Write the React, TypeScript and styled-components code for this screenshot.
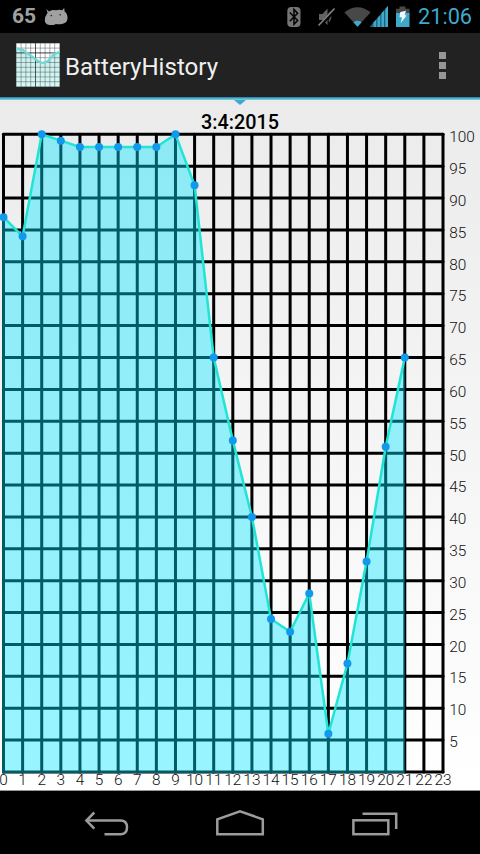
import styled, { createGlobalStyle } from "styled-components";

const colors = {
  holo: "#3fa9cc",
  status: "#a0a0a0",
  dim: "#5b5b5b",
  bar: "#222222",
  nav: "#9c9c9c",
  line: "#1fe4d6",
  dot: "#1199ee",
};

const levels = [87, 84, 100, 99, 98, 98, 98, 98, 98, 100, 92, 65, 52, 40, 24, 22, 28, 6, 17, 33, 51, 65];
const hours = Array.from({ length: 24 }, (_, i) => i);
const steps = Array.from({ length: 21 }, (_, i) => i * 5);

// chart geometry, relative to the top of the chart view
const LEFT = 3.5;
const RIGHT = 443;
const TOP = 34.3;
const BOTTOM = 672;

const toX = (hour: number) => LEFT + (hour * (RIGHT - LEFT)) / 23;
const toY = (level: number) => BOTTOM - (level * (BOTTOM - TOP)) / 100;

export default function App() {
  return (
    <Screen>
      <GlobalStyle />
      <StatusBar>
        <BatteryPercent>65</BatteryPercent>
        <DroidIcon />
        <StatusIcons />
        <Clock>21:06</Clock>
      </StatusBar>
      <ActionBar>
        <AppIcon />
        <AppTitle>BatteryHistory</AppTitle>
        <Overflow>
          <OverflowDot />
          <OverflowDot />
          <OverflowDot />
        </Overflow>
      </ActionBar>
      <TabStrip />
      <Content>
        <TabMarker />
        <ChartTitle>3:4:2015</ChartTitle>
        <BatteryChart />
      </Content>
      <NavBar>
        <NavIcons />
      </NavBar>
    </Screen>
  );
}

function BatteryChart() {
  const points = levels.map((level, hour) => `${toX(hour)},${toY(level)}`).join(" ");
  return (
    <Chart width="480" height="691" viewBox="0 0 480 691">
      <g stroke="#000" strokeWidth="3" strokeLinecap="round">
        {steps.map((level) => (
          <line key={level} x1={LEFT} x2={RIGHT} y1={toY(level)} y2={toY(level)} />
        ))}
        {hours.map((hour) => (
          <line key={hour} x1={toX(hour)} x2={toX(hour)} y1={TOP} y2={BOTTOM} />
        ))}
      </g>
      {steps.slice(1).map((level) => (
        <AxisLabel key={level} x={449.2} y={toY(level) + 6.9 + level / 100}>
          {level}
        </AxisLabel>
      ))}
      {hours.map((hour) => (
        <AxisLabel key={hour} x={toX(hour)} y={684.6} textAnchor="middle">
          {hour}
        </AxisLabel>
      ))}
      <polygon
        points={`${LEFT - 1.5},${BOTTOM + 1} ${LEFT - 1.5},${toY(levels[0])} ${points} ${toX(21)},${BOTTOM + 1}`}
        fill="rgba(0, 230, 255, 0.4)"
      />
      <polyline points={points} fill="none" stroke={colors.line} strokeWidth="2.5" />
      {levels.map((level, hour) => (
        <circle key={hour} cx={toX(hour)} cy={toY(level)} r="4" fill={colors.dot} />
      ))}
    </Chart>
  );
}

function DroidIcon() {
  return (
    <svg width="26" height="33" viewBox="0 0 26 33">
      <path
        d="M2.3 9 L5 11.4 Q8 9.6 12 10.2 Q15.5 9.2 18.2 10.3 L20.2 8 L20.6 11.6 Q23.8 14 23.5 18.6 Q23 23.5 18 23.9 Q14.5 24.5 12 23.9 Q9 25.5 5.4 25 Q1 24.4 .8 20.8 Q.7 16.5 3.6 12.8 Z"
        fill={colors.status}
      />
      <circle cx="7.3" cy="15.6" r=".8" fill="#222" />
      <circle cx="16.2" cy="14.8" r=".8" fill="#222" />
    </svg>
  );
}

function StatusIcons() {
  return (
    <StatusIconRow width="130" height="33" viewBox="284 0 130 33">
      <rect x="287.3" y="7" width="13.2" height="20" rx="4" fill="#757575" />
      <path d="M289.8 12.5 L297.6 20.5 L294 24.2 V9.5 L297.6 13.2 L289.8 21.2" fill="none" stroke="#050505" strokeWidth="1.6" />
      <path d="M319 14 H322.5 L327.5 8.5 V25 L322.5 20 H319 Z" fill="#626262" />
      <path d="M329 12.5 Q332 17 329 21.5" fill="none" stroke="#555" strokeWidth="1.7" />
      <path d="M319.5 26 L335.5 9" stroke="#000" strokeWidth="3.4" />
      <path d="M318.5 25.5 L334.5 8.5" stroke="#858585" strokeWidth="1.6" />
      <path d="M344.3 12.3 Q357.5 2 370.7 12.3 L357.5 26.7 Z" fill="#484848" />
      <path d="M353.4 22.2 Q357.5 19.5 361.6 22.2 L357.5 26.7 Z" fill={colors.holo} />
      <path d="M369.5 27 L388 6 V27 Z" fill="#1f6079" />
      <g fill={colors.holo}>
        <path d="M373.5 27 V22.5 L376.2 19.4 V27 Z" />
        <path d="M377.5 27 V18 L380.2 14.9 V27 Z" />
        <path d="M381.4 27 V13.5 L384 10.5 V27 Z" />
        <path d="M385.3 27 V9 L388 6 V27 Z" />
      </g>
      <path d="M399.5 6.5 H405.5 V8.8 H409.5 V14 H396 V8.8 H399.5 Z" fill="#484848" />
      <rect x="396" y="13" width="13.5" height="14" fill={colors.holo} />
      <path d="M400.3 12 L406 10.8 L404.7 15 L406.5 15.6 L400.7 23.3 L402 17.6 L399.5 17 Z" fill="#eefaff" />
    </StatusIconRow>
  );
}

function AppIcon() {
  const lines = [0, 4.8, 9.6, 14.4, 19.2, 24, 28.8, 33.6, 38.4, 43.2];
  return (
    <svg width="44" height="44" viewBox="0 0 44 44">
      <defs>
        <linearGradient id="iconFill" x1="0" y1="0" x2="0" y2="1">
          <stop offset="0" stopColor="#c9eeec" />
          <stop offset="1" stopColor="#d6f6f4" />
        </linearGradient>
      </defs>
      <rect width="44" height="44" fill="#fff" />
      <path d="M0 5.5 L7 7 L13 11.5 L22 18 L27 20 L32 18 L38 11 L44 9 V44 H0 Z" fill="url(#iconFill)" />
      <g stroke="#384444" strokeOpacity=".55" strokeWidth=".8">
        {lines.map((p) => (
          <path key={p} d={`M${p + 0.3} 0 V44 M0 ${p + 0.3} H44`} />
        ))}
      </g>
      <path d="M19.5 0 V44 M0 9.9 H44" stroke="#222" strokeOpacity=".6" />
      <path d="M0 5.5 L7 7 L13 11.5 L22 18 L27 20 L32 18 L38 11 L44 9" fill="none" stroke="#70d8d5" strokeWidth="2.4" />
    </svg>
  );
}

function NavIcons() {
  return (
    <svg width="480" height="63" viewBox="0 791 480 63" fill="none" stroke={colors.nav} strokeWidth="2.5">
      <path d="M86.5 820.5 H120.5 C125 820.5 127 823.5 127 827.3 C127 831.2 125 834.3 120.5 834.3 H104.5" />
      <path d="M94.3 812.5 L86.4 820.5 L94.3 828.7" />
      <path d="M217.3 834.2 V819.3 L240 811.3 L262.8 819.3 V834.2 Z" />
      <rect x="353.4" y="820.3" width="34.9" height="13.9" />
      <path d="M362.5 813.8 H396.2 V829" />
    </svg>
  );
}

const GlobalStyle = createGlobalStyle`
  * {
    box-sizing: border-box;
  }

  body {
    margin: 0;
    background: #000;
    font-family: Roboto, "Liberation Sans", sans-serif;
  }
`;

const Screen = styled.div`
  width: 480px;
  height: 854px;
  display: flex;
  flex-direction: column;
  overflow: hidden;
  background: #000;

  svg {
    display: block;
    flex-shrink: 0;
  }
`;

const StatusBar = styled.div`
  height: 33px;
  padding: 0 8px 0 12px;
  display: flex;
  align-items: center;
`;

const BatteryPercent = styled.span`
  width: 32px;
  font-size: 21px;
  font-weight: 700;
  line-height: 33px;
  color: ${colors.status};
`;

const StatusIconRow = styled.svg`
  margin-left: auto;
`;

const Clock = styled.span`
  width: 54px;
  margin-left: 4px;
  font-size: 21.7px;
  line-height: 35px;
  white-space: nowrap;
  color: ${colors.holo};
`;

const ActionBar = styled.div`
  height: 64px;
  padding: 0 34px 0 16px;
  display: flex;
  align-items: center;
  background: ${colors.bar};
`;

const AppTitle = styled.h1`
  margin: 3px 0 0 5px;
  font-size: 24.1px;
  font-weight: 400;
  line-height: 30px;
  color: #f0f0f0;
`;

const Overflow = styled.div`
  margin-left: auto;
  display: flex;
  flex-direction: column;
  gap: 3px;
`;

const OverflowDot = styled.span`
  width: 7px;
  height: 7px;
  background: #969696;
`;

const TabStrip = styled.div`
  height: 3px;
  flex-shrink: 0;
  background: linear-gradient(#247c9d, #49b3cf 50%, #8fd0df);
`;

const Content = styled.main`
  position: relative;
  height: 691px;
  flex-shrink: 0;
  border-bottom: 1px solid #999;
  background: linear-gradient(#ebebeb, #ffffff);
`;

const TabMarker = styled.div`
  position: absolute;
  top: 0;
  left: 234px;
  border: 6px solid transparent;
  border-top: 5px solid ${colors.holo};
  border-bottom: 0;
`;

const ChartTitle = styled.h2`
  position: absolute;
  top: 10px;
  left: 0;
  width: 480px;
  margin: 0;
  font-size: 19.8px;
  font-weight: 500;
  line-height: 26px;
  text-align: center;
  color: #000;
`;

const Chart = styled.svg`
  width: 480px;
  height: 691px;
`;

const AxisLabel = styled.text`
  font-size: 15.4px;
  font-weight: 300;
  fill: #111;
`;

const NavBar = styled.nav`
  height: 63px;
  flex-shrink: 0;
  background: #000;
`;
